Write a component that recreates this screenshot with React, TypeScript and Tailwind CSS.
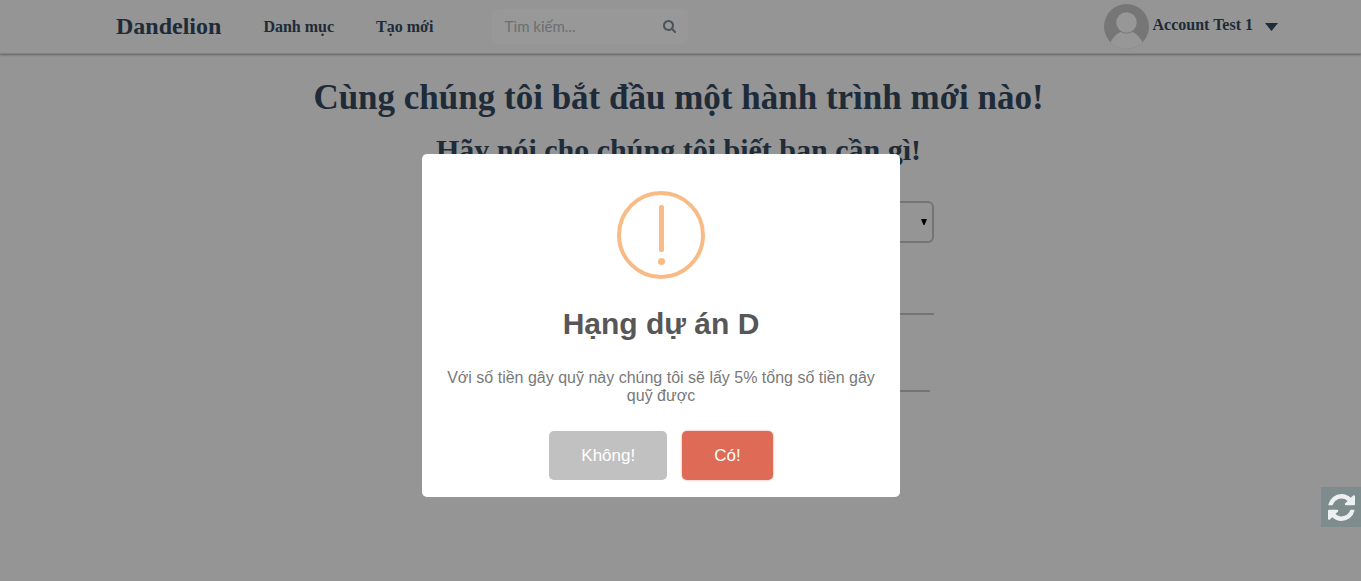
import React from "react";

function Header() {
  return (
    <header className="flex h-[54px] items-center border-b border-[#d8d8d8] pl-[116px] pr-[83px] shadow-[0_1px_2px_rgba(0,0,0,0.35)]">
      <a href="#home" className="pb-0.5 text-2xl font-bold">Dandelion</a>
      <nav className="ml-[42px] flex gap-[42px] text-base font-bold">
        <a href="#categories">Danh mục</a>
        <a href="#create">Tạo mới</a>
      </nav>
      <div className="ml-[29px] h-[50px] self-start border-l border-[#fbfbfb]" />
      <form className="ml-[29px] flex h-[35px] w-[196px] items-center rounded-md bg-[#fdfdfd] px-3">
        <input
          type="search"
          aria-label="Tìm kiếm"
          placeholder="Tìm kiếm..."
          className="min-w-0 flex-1 bg-transparent font-[family-name:'Lato',sans-serif] text-[15px] outline-none placeholder:text-[#b4babf]"
        />
        <button type="button" aria-label="Tìm" className="text-[#808b96]">
          <svg width="13" height="13" viewBox="0 0 1664 1664" fill="currentColor">
            <path d="M1152 704q0-185-131.500-316.500T704 256 387.500 387.500 256 704t131.500 316.500T704 1152t316.500-131.500T1152 704zm512 832q0 52-38 90t-90 38q-54 0-90-38l-343-342q-179 124-399 124-143 0-273.500-55.500t-225-150-150-225T0 704t55.500-273.500 150-225 225-150T704 0t273.500 55.500 225 150 150 225T1408 704q0 220-124 399l343 343q37 37 37 90z" />
          </svg>
        </button>
      </form>
      <button type="button" className="ml-auto flex items-center gap-1 text-base font-bold">
        <svg width="45" height="45" viewBox="0 0 45 45">
          <clipPath id="avatar">
            <circle cx="22.500" cy="22.500" r="22.500" />
          </clipPath>
          <g clipPath="url(#avatar)">
            <rect width="45" height="45" fill="#c5c5c5" />
            <path d="M6 39C10 32 14 27 22.500 27S35 32 39 39L36 45H9Z" fill="#fcfcfc" />
            <circle cx="22.500" cy="18.500" r="11" fill="#c5c5c5" />
            <circle cx="22.500" cy="18.500" r="10.200" fill="#fcfcfc" />
          </g>
        </svg>
        <span className="pb-1">Account Test 1</span>
        <svg className="ml-2" width="13" height="8" viewBox="0 0 13 8" fill="currentColor">
          <path d="M0 0H13L6.500 8Z" />
        </svg>
      </button>
    </header>
  );
}

function ProjectForm() {
  return (
    <main className="pr-1 pt-[22px] text-center font-bold">
      <h1 className="text-[35px] leading-[44px]">Cùng chúng tôi bắt đầu một hành trình mới nào!</h1>
      <h2 className="mt-3 text-[30px] leading-9">Hãy nói cho chúng tôi biết bạn cần gì!</h2>
      <form className="mx-auto mt-[33px] flex w-[510px] flex-col font-normal">
        <div className="relative">
          <select
            aria-label="Danh mục dự án"
            className="h-[42px] w-full appearance-none rounded-md border-2 border-[#bdc3c7] bg-transparent"
          >
            <option></option>
          </select>
          <svg className="pointer-events-none absolute right-[7px] top-[18px]" width="6" height="6" viewBox="0 0 6 6">
            <path d="M0 0H6L3.500 6H2.500Z" fill="black" />
          </svg>
        </div>
        <input aria-label="Tên dự án" className="mt-8 h-10 border-b-2 border-[#bdc3c7] bg-transparent" />
        <input aria-label="Số tiền gây quỹ" className="mr-1 mt-[37px] h-10 border-b-2 border-[#bdc3c7] bg-transparent" />
      </form>
    </main>
  );
}

function WarningDialog() {
  return (
    <div className="fixed inset-0 flex items-start justify-center bg-black/40 pr-[39px] pt-[154px] font-['Liberation_Sans',sans-serif]">
      <section
        role="alertdialog"
        aria-labelledby="dialog-title"
        aria-describedby="dialog-text"
        className="flex w-[478px] flex-col items-center rounded-[5px] bg-white px-[17px] pb-[17px] pt-[37px] text-center"
      >
        <svg width="88" height="88" viewBox="0 0 88 88">
          <circle cx="44" cy="44" r="42" fill="none" stroke="#f8bb86" strokeWidth="4" />
          <rect x="42" y="14" width="5" height="47" rx="2" fill="#f8bb86" />
          <circle cx="44.500" cy="70.500" r="3.500" fill="#f8bb86" />
        </svg>
        <h2 id="dialog-title" className="mt-[25px] text-[30px] font-bold leading-10 text-[#575757]">Hạng dự án D</h2>
        <p id="dialog-text" className="mt-[25px] text-base leading-[18px] text-[#797979]">
          Với số tiền gây quỹ này chúng tôi sẽ lấy 5% tổng số tiền gây quỹ được
        </p>
        <div className="mt-[26px] flex gap-[15px] text-[17px] font-medium text-white">
          <button type="button" className="h-[49px] rounded-[5px] bg-[#c1c1c1] px-8">Không!</button>
          <button type="button" className="h-[49px] rounded-[5px] bg-[#dd6b55] px-8 shadow-[0_0_2px_rgba(221,107,85,0.8)]">Có!</button>
        </div>
      </section>
    </div>
  );
}

export default function App() {
  return (
    <div className="min-h-screen bg-[#f8f8f8] font-['Liberation_Serif',serif] text-[#34495e]">
      <Header />
      <ProjectForm />
      <WarningDialog />
      <button
        type="button"
        aria-label="Tải lại"
        className="fixed bottom-[54px] right-0 flex size-10 items-center justify-center bg-[#7f8c8d] text-[#ecf0f1]"
      >
        <svg width="27" height="27" viewBox="0 0 1536 1536" fill="currentColor">
          <path d="M1511 928q0 5-1 7-64 268-268 434.500T764 1536q-146 0-282.500-55T238 1324l-129 129q-19 19-45 19t-45-19-19-45V960q0-26 19-45t45-19h448q26 0 45 19t19 45-19 45l-137 137q71 66 161 102t187 36q134 0 250-65t186-179q11-17 53-117 8-23 30-23h192q13 0 22.500 9.500t9.500 22.500zm25-800v448q0 26-19 45t-45 19h-448q-26 0-45-19t-19-45 19-45l138-138Q969 256 768 256q-134 0-250 65T332 500q-11 17-53 117-8 23-30 23H50q-13 0-22.500-9.500T18 608v-7q65-268 270-434.500T768 0q146 0 284 55.500T1297 212l130-129q19-19 45-19t45 19 19 45z" />
        </svg>
      </button>
    </div>
  );
}
